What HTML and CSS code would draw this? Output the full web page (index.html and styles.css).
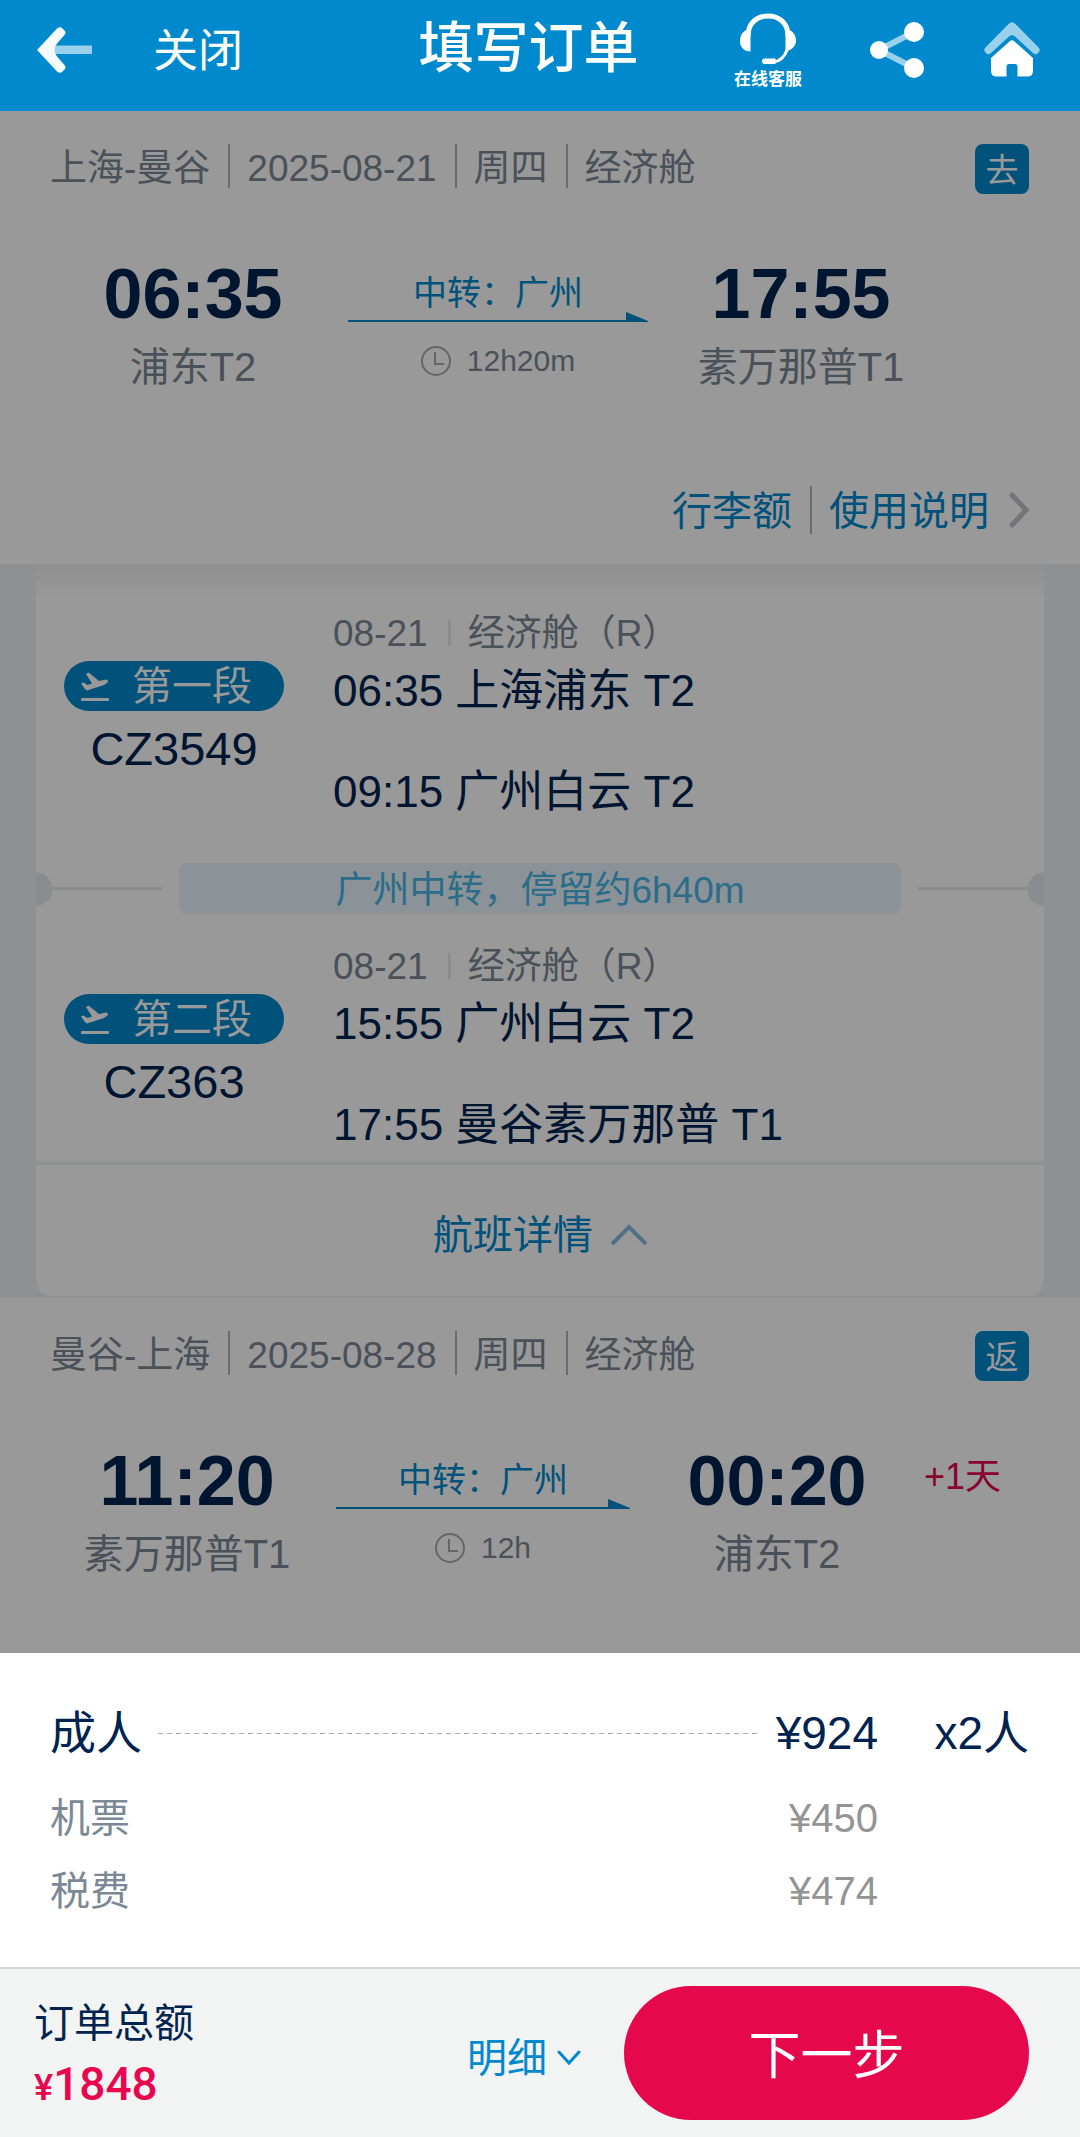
FILE: index.html
```html
<!DOCTYPE html>
<html lang="zh-CN">
<head>
    <meta charset="UTF-8">
    <meta name="viewport" content="width=device-width, initial-scale=1.0">
    <title>填写订单</title>
    <link rel="stylesheet" href="styles.css">
</head>
<body>
    <header class="topbar">
        <div class="topbar-left">
            <button class="icon-btn" type="button" aria-label="返回">
                <svg width="56" height="48" viewBox="0 0 56 48">
                    <path d="M17 19.500H55V28H17Z" fill="#99d0ec"/>
                    <path d="M0 24L20 2.500Q23 0 25.500 2.500L28 5Q29.500 7 27.500 9L20 17.500Q15 24 20 30.500L27.500 39Q29.500 41 28 43L25.500 45.500Q23 48 20 45.500Z" fill="#f5fafd"/>
                </svg>
            </button>
            <button class="close-btn" type="button">关闭</button>
        </div>
        <h1>填写订单</h1>
        <nav class="topbar-right">
            <a class="service" href="#service">
                <svg width="56" height="52" viewBox="0 0 56 52" fill="none">
                    <path d="M8 23C8 10 17 3 28 3S48 10 48 23" stroke="#fff" stroke-width="5"/>
                    <path d="M10.500 38.500C4 38.500 0 34 0 28C0 22.500 3 18 7 17H10.500ZM45.500 38.500C52 37 56 33 56 28C56 22.500 53 18 49 17H45.500Z" fill="#fff"/>
                    <path d="M47.500 36C45 43 40 48.500 33 49" stroke="#fff" stroke-width="3"/>
                    <path d="M25 45.500H35.500V51H25Q22 51 22 48.200T25 45.500Z" fill="#fff"/>
                </svg>
                <span>在线客服</span>
            </a>
            <a class="share" href="#share" aria-label="分享">
                <svg width="54" height="56" viewBox="0 0 54 56">
                    <path d="M44 10L9 28L44 46" fill="none" stroke="#99d0ec" stroke-width="6"/>
                    <circle cx="44" cy="10" r="10" fill="#fff"/>
                    <circle cx="9" cy="28" r="9" fill="#fff"/>
                    <circle cx="44" cy="46" r="10" fill="#fff"/>
                </svg>
            </a>
            <a href="#home" aria-label="首页">
                <svg width="56" height="56" viewBox="0 0 56 56">
                    <path d="M24.500 2Q28 -1.500 31.500 2L55 26Q56.500 28 55 30L53 32Q51 33 49 31L31 14.500Q28 12 25 14.500L7 31Q5 33 3 32L1 30Q-.500 28 1 26Z" fill="#99d0ec"/>
                    <path d="M25.500 19.500Q28 17 30.500 19.500L49 36V49Q49 54.500 43.500 54.500H33.500V45Q33.500 42 31 42H25Q22.500 42 22.500 45V54.500H12.500Q7 54.500 7 49V36Z" fill="#fff"/>
                </svg>
            </a>
        </nav>
    </header>

    <main>
        <section class="trip">
            <div class="trip-head">
                <span>上海-曼谷</span>
                <span>2025-08-21</span>
                <span>周四</span>
                <span>经济舱</span>
                <strong class="badge">去</strong>
            </div>
            <div class="route">
                <div class="stop">
                    <time>06:35</time>
                    <p>浦东T2</p>
                </div>
                <div class="via">
                    <p>中转：广州</p>
                    <div class="arrow"><i></i><svg width="22" height="10" viewBox="0 0 22 10"><path d="M0 0L22 9V10H0Z" fill="#0089cd"/></svg></div>
                    <div class="duration">
                        <svg width="30" height="30" viewBox="0 0 30 30" fill="none" stroke="#aaa" stroke-width="2"><circle cx="15" cy="15" r="14"/><path d="M14 6V18H23"/></svg>
                        <span>12h20m</span>
                    </div>
                </div>
                <div class="stop">
                    <time>17:55</time>
                    <p>素万那普T1</p>
                </div>
            </div>
            <div class="trip-links">
                <a href="#baggage">行李额</a>
                <a href="#rules">使用说明</a>
                <svg width="20" height="36" viewBox="0 0 20 36" fill="none" stroke="#c2c2ca" stroke-width="5" stroke-linecap="round"><path d="M3 3L17 18L3 33"/></svg>
            </div>
        </section>

        <section class="detail">
            <div class="card">
                <div class="segment">
                    <div class="flight">
                        <div class="pill">
                            <svg width="28" height="29" viewBox="0 0 28 29" fill="#fff"><path d="M0 11.500L2.500 10.500L6.500 13L11 11.500L5 2L7.500 .500L18 9L25 7.500Q28 8 26.500 10.500L23 13L6 18.500Q4.500 18 3.500 16.500Z"/><rect y="26" width="28" height="3" rx="1"/></svg>
                            <span>第一段</span>
                        </div>
                        <p>CZ3549</p>
                    </div>
                    <div class="schedule">
                        <div class="cabin"><span>08-21</span><span>经济舱（R）</span></div>
                        <p>06:35 上海浦东 T2</p>
                        <p>09:15 广州白云 T2</p>
                    </div>
                </div>
                <div class="transfer">
                    <p>广州中转，停留约6h40m</p>
                </div>
                <div class="segment">
                    <div class="flight">
                        <div class="pill">
                            <svg width="28" height="29" viewBox="0 0 28 29" fill="#fff"><path d="M0 11.500L2.500 10.500L6.500 13L11 11.500L5 2L7.500 .500L18 9L25 7.500Q28 8 26.500 10.500L23 13L6 18.500Q4.500 18 3.500 16.500Z"/><rect y="26" width="28" height="3" rx="1"/></svg>
                            <span>第二段</span>
                        </div>
                        <p>CZ363</p>
                    </div>
                    <div class="schedule">
                        <div class="cabin"><span>08-21</span><span>经济舱（R）</span></div>
                        <p>15:55 广州白云 T2</p>
                        <p>17:55 曼谷素万那普 T1</p>
                    </div>
                </div>
                <button class="detail-toggle" type="button">
                    航班详情
                    <svg width="36" height="22" viewBox="0 0 36 22" fill="none" stroke="#88bbdf" stroke-width="4"><path d="M1 20L18 3L35 20"/></svg>
                </button>
            </div>
        </section>

        <section class="trip">
            <div class="trip-head">
                <span>曼谷-上海</span>
                <span>2025-08-28</span>
                <span>周四</span>
                <span>经济舱</span>
                <strong class="badge">返</strong>
            </div>
            <div class="route route-next-day">
                <div class="stop">
                    <time>11:20</time>
                    <p>素万那普T1</p>
                </div>
                <div class="via">
                    <p>中转：广州</p>
                    <div class="arrow"><i></i><svg width="22" height="10" viewBox="0 0 22 10"><path d="M0 0L22 9V10H0Z" fill="#0089cd"/></svg></div>
                    <div class="duration">
                        <svg width="30" height="30" viewBox="0 0 30 30" fill="none" stroke="#aaa" stroke-width="2"><circle cx="15" cy="15" r="14"/><path d="M14 6V18H23"/></svg>
                        <span>12h</span>
                    </div>
                </div>
                <div class="stop">
                    <time>00:20</time>
                    <p>浦东T2</p>
                </div>
                <span class="plus-day">+1天</span>
            </div>
        </section>
        <div class="mask"></div>
    </main>

    <section class="fare">
        <table>
            <tr class="fare-main">
                <th scope="row"><div class="leader">成人</div></th>
                <td>¥924</td>
                <td>x2人</td>
            </tr>
            <tr>
                <th scope="row">机票</th>
                <td>¥450</td>
                <td></td>
            </tr>
            <tr>
                <th scope="row">税费</th>
                <td>¥474</td>
                <td></td>
            </tr>
        </table>
    </section>

    <footer class="paybar">
        <div class="total">
            <p>订单总额</p>
            <p class="amount"><small>¥</small>1848</p>
        </div>
        <button class="more" type="button">
            明细
            <svg width="24" height="16" viewBox="0 0 24 16" fill="none" stroke="#0089cd" stroke-width="3" stroke-linecap="round"><path d="M2 2L12 13L22 2"/></svg>
        </button>
        <button class="next" type="button">下一步</button>
    </footer>
</body>
</html>
```

FILE: styles.css
```css
* {
    box-sizing: border-box;
}
body {
    display: flex;
    flex-direction: column;
    min-height: 100vh;
    margin: 0;
    font-family: "Liberation Sans", "Noto Sans CJK SC", sans-serif;
    color: #002350;
    background: #fff;
}
h1, p {
    margin: 0;
}
a {
    color: #0089cd;
    text-decoration: none;
}
button {
    border: 0;
    padding: 0;
    background: none;
    font-family: inherit;
    color: #0089cd;
}
svg {
    display: block;
    flex: none;
}

/* top bar */
.topbar {
    display: grid;
    grid-template-columns: 19fr auto 20fr;
    height: 111px;
    padding: 0 40px 12px 37px;
    align-items: center;
    background: #0089cd;
    color: #fff;
}
.topbar-left, .topbar-right {
    display: flex;
    align-items: center;
}
.topbar-left {
    gap: 60px;
}
.topbar-right {
    justify-content: flex-end;
    gap: 60px;
}
.close-btn {
    padding-top: 4px;
    font-size: 45px;
    line-height: 60px;
    color: #fff;
}
.topbar h1 {
    padding-bottom: 4px;
    font-size: 55px;
    line-height: 72px;
    font-weight: 500;
}
.service {
    display: flex;
    flex-direction: column;
    align-items: center;
    gap: 3px;
    margin-right: 8px;
    padding-top: 6px;
    font-size: 17px;
    line-height: 24px;
    font-weight: 700;
    color: #fff;
}

/* content under the fare sheet */
main {
    position: relative;
    flex: 1;
}
.mask {
    position: absolute;
    inset: 0;
    background: rgba(0, 0, 0, 0.4);
}
.trip {
    padding: 33px 51px 30px 50px;
}
.trip-head {
    display: flex;
    align-items: flex-start;
    font-size: 37px;
    color: #7c8895;
}
.trip-head span {
    height: 44px;
    line-height: 50px;
}
.trip-head span + span {
    margin-left: 18px;
    padding-left: 17px;
    border-left: 2px solid #b0b4b9;
}
.badge {
    width: 54px;
    height: 50px;
    margin-left: auto;
    border-radius: 8px;
    background: #0089cd;
    color: #fff;
    font-size: 33px;
    line-height: 54px;
    font-weight: 400;
    text-align: center;
}
.route {
    display: grid;
    grid-template-columns: 298fr 300fr 306fr 75fr;
    margin-top: 63px;
    text-align: center;
}
.route-next-day {
    grid-template-columns: 286fr 294fr 294fr 105fr;
}
.stop time {
    display: block;
    font-size: 70px;
    line-height: 74px;
    font-weight: 700;
}
.stop p {
    margin-top: 12px;
    font-size: 40px;
    line-height: 48px;
    color: #7c8895;
}
.stop:first-child {
    padding-right: 12px;
}
.via > p {
    margin-top: 14px;
    font-size: 34px;
    line-height: 44px;
    color: #0089cd;
}
.arrow {
    display: flex;
    align-items: flex-end;
    margin-top: -3px;
}
.arrow i {
    flex: 1;
    height: 2px;
    background: #0089cd;
}
.duration {
    display: flex;
    align-items: center;
    justify-content: center;
    gap: 16px;
    margin-top: 19px;
    font-size: 30px;
    line-height: 40px;
    color: #7c8895;
}
.plus-day {
    padding-top: 11px;
    font-size: 36px;
    line-height: 44px;
    color: #e4064d;
    text-align: left;
    white-space: nowrap;
}
.trip-links {
    display: flex;
    align-items: center;
    justify-content: flex-end;
    margin-top: 95px;
    font-size: 40px;
}
.trip-links a {
    height: 48px;
    line-height: 50px;
}
.trip-links a + a {
    margin-left: 18px;
    padding-left: 17px;
    border-left: 2px solid #b0b4b9;
}
.trip-links svg {
    margin-left: 20px;
}

/* flight details */
.detail {
    padding: 0 36px 2px;
    background: #edf0f4;
}
.card {
    overflow: hidden;
    border-radius: 0 0 16px 16px;
    background: linear-gradient(#f0f0f0, #fff 36px);
}
.segment {
    display: grid;
    grid-template-columns: 220px 1fr;
    column-gap: 49px;
    padding: 48px 28px 46px;
}
.transfer + .segment {
    padding-top: 31px;
    padding-bottom: 12px;
}
.flight {
    margin-top: 49px;
    text-align: center;
}
.pill {
    display: flex;
    align-items: center;
    gap: 23px;
    height: 50px;
    padding-left: 17px;
    border-radius: 25px;
    background: #0089cd;
    color: #fff;
    font-size: 40px;
    line-height: 50px;
}
.flight p {
    margin-top: 11px;
    font-size: 47px;
    line-height: 54px;
}
.cabin {
    display: flex;
    align-items: center;
    font-size: 37px;
    line-height: 44px;
    color: #7c8895;
}
.cabin span + span::before {
    content: "";
    display: inline-block;
    width: 3px;
    height: 26px;
    margin: 0 17px 0 20px;
    background: #e4e8f0;
}
.schedule p {
    margin-top: 10px;
    font-size: 44px;
    line-height: 50px;
}
.schedule p + p {
    margin-top: 51px;
}
.transfer {
    display: flex;
    align-items: center;
    gap: 17px;
}
.transfer p {
    flex: 1;
    height: 51px;
    border-radius: 8px;
    background: #e8f5fd;
    color: #48b5e4;
    font-size: 37px;
    line-height: 55px;
    text-align: center;
}
/* ticket notch and the line that leads to it */
.transfer::before, .transfer::after {
    content: "";
    width: 126px;
    height: 34px;
    background:
        radial-gradient(circle at 0 50%, #e8eaf0 16px, transparent 17px),
        linear-gradient(#e8eaf0, #e8eaf0) center / 100% 3px no-repeat;
}
.transfer::after {
    background:
        radial-gradient(circle at 100% 50%, #e8eaf0 16px, transparent 17px),
        linear-gradient(#e8eaf0, #e8eaf0) center / 100% 3px no-repeat;
}
.detail-toggle {
    display: flex;
    align-items: center;
    justify-content: center;
    gap: 18px;
    width: 100%;
    height: 134px;
    padding-top: 8px;
    border-top: 3px solid #edf0f5;
    font-size: 40px;
    line-height: 48px;
}

/* fare sheet */
.fare {
    padding: 44px 51px 39px 50px;
    border-bottom: 2px solid #d4d6d8;
}
.fare table {
    width: 100%;
    border-collapse: collapse;
    font-size: 40px;
}
.fare th, .fare td {
    height: 73px;
    padding: 0;
    line-height: 73px;
    font-weight: 400;
    text-align: right;
}
.fare th {
    text-align: left;
    color: #7c8895;
}
.fare td {
    color: #949494;
}
.fare td:nth-child(2) {
    width: 117px;
}
.fare td:last-child {
    width: 151px;
}
.fare .fare-main th, .fare .fare-main td {
    height: 85px;
    padding-bottom: 12px;
    font-size: 46px;
    color: #002350;
}
.leader {
    display: flex;
    align-items: center;
    gap: 16px;
}
.leader::after {
    content: "";
    flex: 1;
    height: 1px;
    background: repeating-linear-gradient(90deg, #a5abb5 0 5px, transparent 5px 9px);
}

/* pay bar */
.paybar {
    display: flex;
    align-items: center;
    height: 168px;
    padding: 0 51px 0 34px;
    background: #f2f3f3;
}
.total {
    flex: 1;
    padding-top: 6px;
    font-size: 40px;
    line-height: 61px;
}
.amount {
    font-family: Roboto, sans-serif;
    font-size: 46px;
    font-weight: 500;
    color: #e8064f;
}
.amount small {
    font-size: 36px;
}
.more {
    display: flex;
    align-items: center;
    gap: 10px;
    margin-right: 43px;
    padding-top: 10px;
    font-size: 40px;
    line-height: 48px;
}
.next {
    width: 405px;
    height: 134px;
    padding-bottom: 4px;
    border-radius: 67px;
    background: #e5084d;
    color: #fff;
    font-size: 52px;
}
```
